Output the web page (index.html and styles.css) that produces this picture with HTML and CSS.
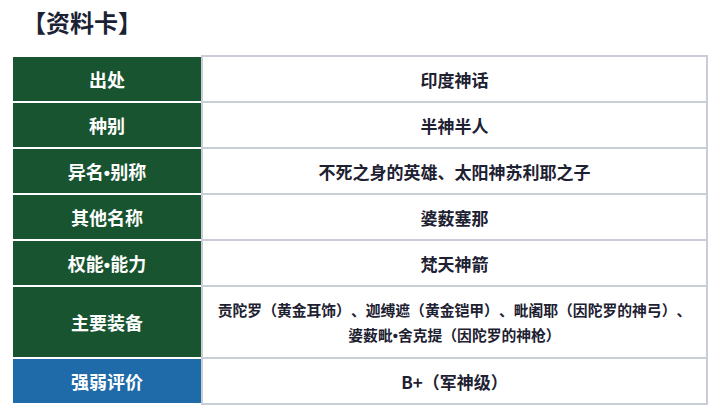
FILE: index.html
```html
<!DOCTYPE html>
<html lang="zh-CN">
<head>
<meta charset="utf-8">
<title>资料卡</title>
<link rel="stylesheet" href="styles.css">
</head>
<body>
<div class="page">
  <h2 class="title">【资料卡】</h2>
  <div class="card">
    <div class="label"><span>出处</span></div>
    <div class="value"><span>印度神话</span></div>
    <div class="label"><span>种别</span></div>
    <div class="value"><span>半神半人</span></div>
    <div class="label"><span>异名<span class="dot">•</span>别称</span></div>
    <div class="value"><span>不死之身的英雄、太阳神苏利耶之子</span></div>
    <div class="label"><span>其他名称</span></div>
    <div class="value"><span>婆薮塞那</span></div>
    <div class="label"><span>权能<span class="dot">•</span>能力</span></div>
    <div class="value"><span>梵天神箭</span></div>
    <div class="label"><span>主要装备</span></div>
    <div class="value small">
      <div class="lines">
        <div class="line">贡陀罗（黄金耳饰）、迦缚遮（黄金铠甲）、毗阇耶（因陀罗的神弓）、</div>
        <div class="line">婆薮毗<span class="dot">•</span>舍克提（因陀罗的神枪）</div>
      </div>
    </div>
    <div class="label blue last"><span>强弱评价</span></div>
    <div class="value last"><span>B+（军神级）</span></div>
  </div>
</div>
</body>
</html>
```

FILE: styles.css
```css
html, body {
  margin: 0;
  padding: 0;
  background: #ffffff;
}

body {
  font-family: "Noto Sans CJK SC", "Noto Sans", sans-serif;
  color: #1d2131;
  text-spacing-trim: space-all;
}

.page {
  padding: 0 12px 0 13px;
}

.title {
  margin: 0;
  padding: 5px 0 0 9px;
  height: 55px;
  box-sizing: border-box;
  font-size: 24px;
  line-height: 34px;
  font-weight: 700;
  color: #1b2233;
}

.card {
  display: grid;
  grid-template-columns: 188px 507px;
  grid-template-rows: 46px 46px 46px 46px 46px 72px 48px;
}

.label {
  background: #18542f;
  border-top: 2px solid #ffffff;
  color: #ffffff;
  font-size: 18px;
  font-weight: 700;
  display: flex;
  align-items: center;
  justify-content: center;
}

.dot {
  font-family: "Liberation Sans", sans-serif;
}

.label.blue {
  background: #1f6aa8;
}

.label.last {
  border-bottom: 2px solid #ffffff;
}

.value {
  border: 2px solid #c9cdd6;
  border-bottom: 0;
  font-size: 17px;
  font-weight: 700;
  display: flex;
  align-items: center;
  justify-content: center;
  text-align: center;
  color: #1d2131;
}

.value.small {
  font-size: 14.8px;
  line-height: 25px;
  padding-top: 2px;
}

.line {
  white-space: nowrap;
}

.value.last {
  border-bottom: 2px solid #c9cdd6;
}
```
